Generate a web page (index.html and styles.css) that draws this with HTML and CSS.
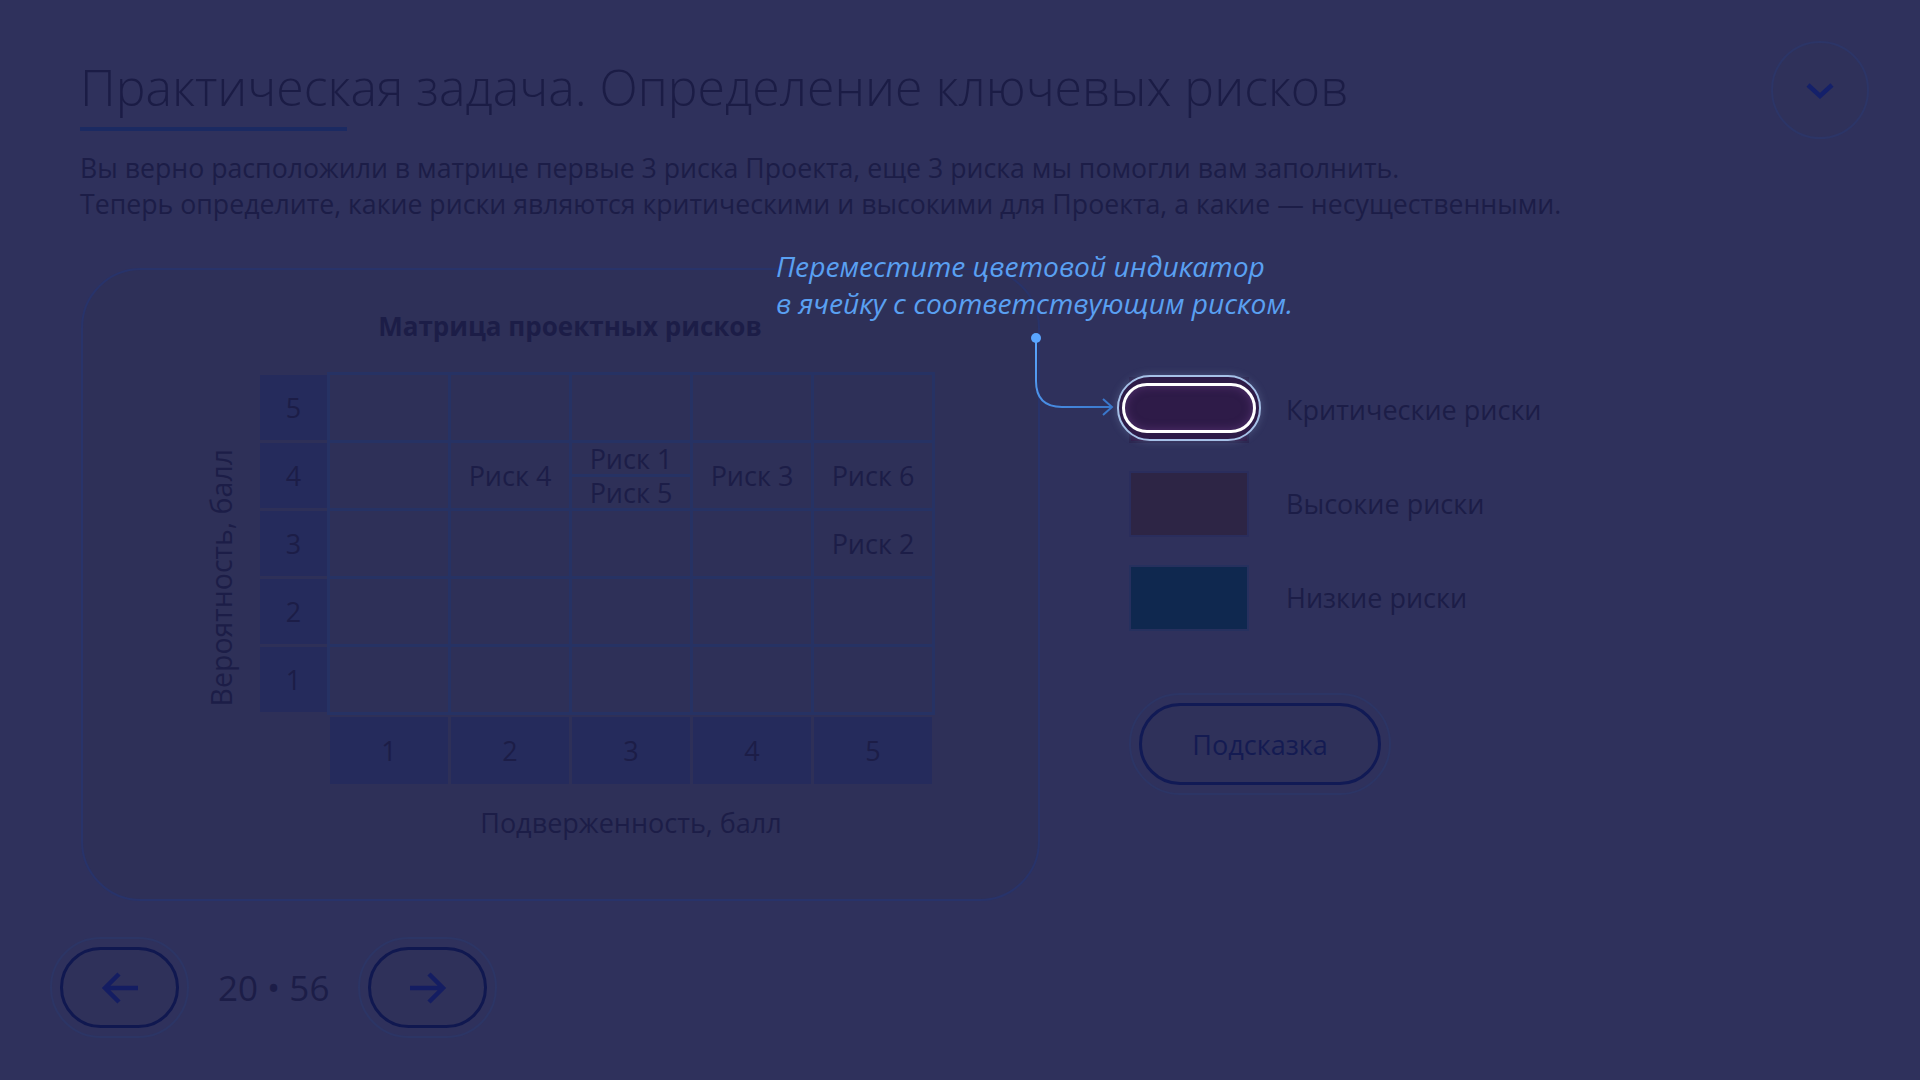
FILE: index.html
```html
<!DOCTYPE html>
<html lang="ru">
<head>
<meta charset="utf-8">
<title>Практическая задача</title>
<link rel="stylesheet" href="styles.css">
</head>
<body>
<div class="page">
  <header class="header">
    <div class="title-block">
      <h1 class="title">Практическая задача. Определение ключевых рисков</h1>
      <div class="title-line"></div>
    </div>
    <button class="round-btn" aria-label="Свернуть">
      <svg width="30" height="18" viewBox="0 0 30 18"><path d="M3 3 L15 14 L27 3" fill="none" stroke="#14206a" stroke-width="4.5"/></svg>
    </button>
  </header>

  <p class="lead">Вы верно расположили в матрице первые 3 риска Проекта, еще 3 риска мы помогли вам заполнить.<br>Теперь определите, какие риски являются критическими и высокими для Проекта, а какие — несущественными.</p>

  <main class="main">
    <section class="card">
      <div class="matrix-title">Матрица проектных рисков</div>
      <div class="matrix-wrap">
        <div class="y-label">Вероятность, балл</div>
        <div class="matrix">
          <div class="matrix-top">
            <div class="row-heads">
              <div class="head">5</div>
              <div class="head">4</div>
              <div class="head">3</div>
              <div class="head">2</div>
              <div class="head">1</div>
            </div>
            <div class="cells">
              <div class="cell"></div><div class="cell"></div><div class="cell"></div><div class="cell"></div><div class="cell"></div>
              <div class="cell"></div><div class="cell">Риск 4</div><div class="cell split"><span>Риск 1</span><span>Риск 5</span></div><div class="cell">Риск 3</div><div class="cell">Риск 6</div>
              <div class="cell"></div><div class="cell"></div><div class="cell"></div><div class="cell"></div><div class="cell">Риск 2</div>
              <div class="cell"></div><div class="cell"></div><div class="cell"></div><div class="cell"></div><div class="cell"></div>
              <div class="cell"></div><div class="cell"></div><div class="cell"></div><div class="cell"></div><div class="cell"></div>
            </div>
          </div>
          <div class="col-heads">
            <div class="head">1</div>
            <div class="head">2</div>
            <div class="head">3</div>
            <div class="head">4</div>
            <div class="head">5</div>
          </div>
        </div>
      </div>
      <div class="x-label">Подверженность, балл</div>
    </section>

    <aside class="side">
      <ul class="legend">
        <li class="legend-row">
          <span class="swatch swatch-critical">
            <span class="pill-outer"></span>
            <span class="pill-inner"></span>
          </span>
          <span class="legend-text">Критические риски</span>
        </li>
        <li class="legend-row">
          <span class="swatch swatch-high"></span>
          <span class="legend-text">Высокие риски</span>
        </li>
        <li class="legend-row">
          <span class="swatch swatch-low"></span>
          <span class="legend-text">Низкие риски</span>
        </li>
      </ul>
      <div class="ring hint-ring"><button class="hint-btn">Подсказка</button></div>
    </aside>

    <div class="tip">Переместите цветовой индикатор<br>в ячейку с соответствующим риском.</div>
    <svg class="tip-arrow" width="90" height="90" viewBox="0 0 90 90">
      <defs>
        <linearGradient id="g" x1="0" y1="0" x2="1" y2="1">
          <stop offset="0" stop-color="#5aa6ff"/>
          <stop offset="1" stop-color="#3a78cc"/>
        </linearGradient>
      </defs>
      <circle cx="6" cy="7" r="5" fill="#5aa6ff"/>
      <path d="M6 7 V50 Q6 76 32 76 H82" fill="none" stroke="url(#g)" stroke-width="2"/>
      <path d="M73 68 L82 76 L73 84" fill="none" stroke="#3a78cc" stroke-width="2"/>
    </svg>
  </main>

  <nav class="nav">
    <div class="ring nav-ring"><button class="nav-btn" aria-label="Назад">
      <svg width="40" height="34" viewBox="0 0 40 34"><path d="M38 17 H5 M19 3 L5 17 L19 31" fill="none" stroke="#141d62" stroke-width="4.5"/></svg>
    </button></div>
    <div class="pager">20 • 56</div>
    <div class="ring nav-ring"><button class="nav-btn" aria-label="Вперёд">
      <svg width="40" height="34" viewBox="0 0 40 34"><path d="M2 17 H35 M21 3 L35 17 L21 31" fill="none" stroke="#141d62" stroke-width="4.5"/></svg>
    </button></div>
  </nav>
</div>
</body>
</html>
```

FILE: styles.css
```css
* { box-sizing: border-box; }
html, body { margin: 0; padding: 0; }
body {
  width: 1920px;
  height: 1080px;
  overflow: hidden;
  background: #2f315c;
  font-family: "Open Sans", "Noto Sans", sans-serif;
  color: #1c1d47;
}
.page {
  padding: 41px 51px 0 80px;
}
.header {
  display: flex;
  justify-content: space-between;
  align-items: flex-start;
}
.title-block { padding-top: 15px; }
.title {
  margin: 0;
  font-size: 50px;
  font-weight: 300;
  line-height: 62px;
  color: #1b1c45;
}
.title-line {
  width: 267px;
  height: 4px;
  background: #1b2a62;
  margin-top: 9px;
}
.round-btn {
  width: 98px;
  height: 98px;
  border-radius: 50%;
  border: 2px solid #2c3567;
  background: #2f315a;
  display: flex;
  align-items: center;
  justify-content: center;
  padding: 2px 0 0 0;
}
.lead {
  margin: 11px 0 0 0;
  font-size: 26.7px;
  line-height: 36px;
  color: #1c1d47;
}
.main {
  position: relative;
  display: flex;
  margin-top: 46px;
}
.card {
  width: 959px;
  height: 633px;
  margin-left: 1px;
  border: 2px solid #28336a;
  border-radius: 60px;
  background: #2e3058;
  padding: 38px 0 0 120px;
}
.matrix-title {
  font-weight: 700;
  font-size: 26px;
  line-height: 36px;
  text-align: center;
  width: 700px;
  margin-left: 17px;
}
.matrix-wrap {
  display: flex;
  align-items: center;
  margin-top: 28px;
}
.y-label {
  writing-mode: vertical-rl;
  transform: rotate(180deg);
  font-size: 28.5px;
  line-height: 36px;
  width: 36px;
  margin-right: 21px;
  text-align: center;
  white-space: nowrap;
}
.matrix { display: flex; flex-direction: column; }
.matrix-top { display: flex; }
.row-heads {
  display: flex;
  flex-direction: column;
  gap: 3px;
  padding-top: 3px;
  width: 67px;
}
.head {
  background: #252b5c;
  display: flex;
  align-items: center;
  justify-content: center;
  font-size: 27px;
  color: #1c1d47;
}
.row-heads .head { height: 65px; }
.cells {
  display: grid;
  grid-template-columns: repeat(5, 118px);
  grid-template-rows: repeat(5, 65px);
  gap: 3px;
  padding: 3px;
  background: #263264;
}
.cell {
  background: #2e3058;
  display: flex;
  align-items: center;
  justify-content: center;
  font-size: 27px;
  color: #1c1d47;
}
.cell.split {
  flex-direction: column;
  background: #263264;
  gap: 3px;
}
.cell.split span {
  flex: 1;
  width: 100%;
  background: #2e3058;
  display: flex;
  align-items: center;
  justify-content: center;
  line-height: 1;
}
.col-heads {
  display: flex;
  gap: 3px;
  padding-left: 3px;
  margin-left: 67px;
  margin-top: 2px;
}
.col-heads .head { width: 118px; height: 67px; }
.x-label {
  margin-top: 21px;
  margin-left: 124px;
  width: 608px;
  text-align: center;
  font-size: 27px;
  line-height: 36px;
}
.side {
  margin-left: 89px;
  padding-top: 109px;
}
.legend {
  list-style: none;
  margin: 0;
  padding: 0;
  display: flex;
  flex-direction: column;
  gap: 28px;
}
.legend-row {
  display: flex;
  align-items: center;
  gap: 37px;
}
.swatch {
  position: relative;
  width: 120px;
  height: 66px;
  border: 2px solid #28306a;
}
.swatch-critical { background: #2e1b48; border-color: #2a2650; }
.swatch-high { background: #2d2545; border-color: #2a2d5c; }
.swatch-low { background: #0f284f; border-color: #26305e; }
.pill-outer {
  position: absolute;
  left: -14px;
  top: -4px;
  width: 144px;
  height: 66px;
  border: 2px solid #a6c1e8;
  border-radius: 33px;
  background: #2e1b48;
  box-shadow: 0 0 8px rgba(166, 193, 232, 0.25);
}
.pill-inner {
  position: absolute;
  left: -9px;
  top: 4px;
  width: 134px;
  height: 50px;
  border: 3px solid #ffffff;
  border-radius: 25px;
  background: #2e1b48;
  box-shadow: inset 0 0 10px rgba(120, 70, 150, 0.5);
}
.legend-text {
  font-size: 27px;
  line-height: 36px;
  color: #1c1d47;
}
.ring {
  display: inline-block;
  border: 2px solid #2c3565;
  border-radius: 60px;
  padding: 8px;
}
.hint-ring { margin-top: 62px; }
.hint-btn {
  width: 242px;
  height: 82px;
  border: 3px solid #111a55;
  border-radius: 41px;
  background: #2f315a;
  font-family: "Open Sans", "Noto Sans", sans-serif;
  font-size: 27px;
  color: #141b52;
  padding: 0;
}
.tip {
  position: absolute;
  left: 696px;
  top: -20px;
  font-style: italic;
  font-size: 28.2px;
  line-height: 37px;
  color: #5aa0f2;
}
.tip-arrow {
  position: absolute;
  left: 950px;
  top: 63px;
}
.nav {
  display: flex;
  align-items: center;
  margin-top: 36px;
  margin-left: -30px;
}
.nav-btn {
  width: 119px;
  height: 81px;
  border: 3px solid #101850;
  border-radius: 41px;
  background: #2f315a;
  display: flex;
  align-items: center;
  justify-content: center;
  padding: 0;
}
.pager {
  font-size: 35px;
  line-height: 40px;
  color: #1c1d47;
  margin: 0 29px;
}
```
